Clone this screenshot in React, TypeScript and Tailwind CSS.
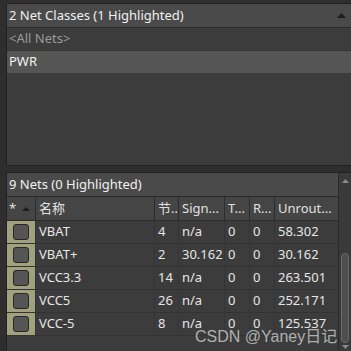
import React from "react"

const rows = [
  { name: "VBAT", nodes: "4", sig: "n/a", t: "0", r: "0", unrouted: "58.302" },
  { name: "VBAT+", nodes: "2", sig: "30.162", t: "0", r: "0", unrouted: "30.162" },
  { name: "VCC3.3", nodes: "14", sig: "n/a", t: "0", r: "0", unrouted: "263.501" },
  { name: "VCC5", nodes: "26", sig: "n/a", t: "0", r: "0", unrouted: "252.171" },
  { name: "VCC-5", nodes: "8", sig: "n/a", t: "0", r: "0", unrouted: "125.537" },
]

const cols = "grid grid-cols-[29px_119px_24px_46px_25px_25px_63px]"

export default function App() {
  return (
    <div
      className="w-[351px] h-[351px] bg-[#2e2e2e] flex flex-col overflow-hidden text-[13px] text-[#e6e6e6] relative"
      style={{ fontFamily: '"Noto Sans", "Noto Sans CJK SC", sans-serif' }}
    >
      {/* Net classes panel */}
      <div className="ml-[6px] mt-[3px] h-[163px] border-l border-t border-b border-[#222] bg-[#3c3c3c] flex flex-col">
        <div className="h-[24px] bg-[#4a4a4a] border-b border-[#2a2a2a] flex items-center justify-between pl-[2px] pr-[5px]">
          <span className="text-[#f0f0f0]">2 Net Classes (1 Highlighted)</span>
          <svg width="9" height="5" viewBox="0 0 9 5">
            <path d="M0 5 L4.5 0 L9 5 Z" fill="#1e1e1e" />
          </svg>
        </div>
        <div className="h-[23px] flex items-center pl-[2px] text-[#9a9a9a] border-b border-[#353535]">&lt;All Nets&gt;</div>
        <div className="h-[22px] flex items-center pl-[2px] bg-[#555555] text-[#f2f2f2]">PWR</div>
      </div>

      {/* Nets panel */}
      <div className="ml-[6px] mt-[6px] flex-1 border-l border-t border-[#222] flex min-h-0">
        <div className="flex-1 bg-[#3c3c3c] flex flex-col">
          <div className="h-[24px] bg-[#4a4a4a] border-b border-[#2a2a2a] flex items-center pl-[2px]">
            <span className="text-[#f0f0f0]">9 Nets (0 Highlighted)</span>
          </div>
          <div className={`${cols} h-[24px] bg-[#454545] border-b border-[#2c2c2c] text-[#e0e0e0]`}>
            <div className="flex items-center pl-[2px] border-r border-[#2c2c2c] gap-[6px]">
              <span>*</span>
              <svg width="8" height="4" viewBox="0 0 8 4">
                <path d="M0 4 L4 0 L8 4 Z" fill="#1f1f1f" />
              </svg>
            </div>
            <div className="flex items-center pl-[3px] border-r border-[#2c2c2c]">名称</div>
            <div className="flex items-center pl-[3px] border-r border-[#2c2c2c] overflow-hidden whitespace-nowrap">节..</div>
            <div className="flex items-center pl-[3px] border-r border-[#2c2c2c] overflow-hidden whitespace-nowrap">Sign...</div>
            <div className="flex items-center pl-[3px] border-r border-[#2c2c2c] overflow-hidden whitespace-nowrap">T...</div>
            <div className="flex items-center pl-[3px] border-r border-[#2c2c2c] overflow-hidden whitespace-nowrap">R...</div>
            <div className="flex items-center pl-[3px] overflow-hidden whitespace-nowrap">Unrout...</div>
          </div>
          {rows.map((r) => (
            <div key={r.name} className={`${cols} h-[23px] border-b border-[#333333]`}>
              <div className="bg-[#a1a17d] flex items-center justify-center border-r border-[#333333]">
                <div className="w-[16px] h-[16px] rounded-[3px] bg-[#555555] border border-[#262626]" />
              </div>
              <div className="flex items-center pl-[3px] border-r border-[#363636]">{r.name}</div>
              <div className="flex items-center pl-[3px] border-r border-[#363636]">{r.nodes}</div>
              <div className="flex items-center pl-[3px] border-r border-[#363636] whitespace-nowrap">{r.sig}</div>
              <div className="flex items-center pl-[3px] border-r border-[#363636]">{r.t}</div>
              <div className="flex items-center pl-[3px] border-r border-[#363636]">{r.r}</div>
              <div className="flex items-center pl-[3px]">{r.unrouted}</div>
            </div>
          ))}
        </div>

        {/* Scrollbar */}
        <div className="w-[13px] bg-[#3a3a3a] border-l border-[#2a2a2a] flex flex-col items-center">
          <svg className="mt-[6px]" width="7" height="4" viewBox="0 0 7 4">
            <path d="M0 4 L3.5 0 L7 4 Z" fill="#8a8a8a" />
          </svg>
          <div className="flex-1" />
          <div className="w-[8px] h-[90px] rounded-[4px] bg-[#4e4e4e] border border-[#6a6a6a]" />
          <svg className="mt-[2px] mb-[2px]" width="7" height="4" viewBox="0 0 7 4">
            <path d="M0 0 L3.5 4 L7 0 Z" fill="#8a8a8a" />
          </svg>
        </div>
      </div>

      {/* Watermark */}
      <div
        className="absolute left-[195px] top-[325px] text-[16px] text-[#d0d0d0]/80 whitespace-nowrap"
        style={{ fontFamily: '"Liberation Sans", "Noto Sans CJK SC", sans-serif' }}
      >
        CSDN @Yaney日记
      </div>
    </div>
  )
}
